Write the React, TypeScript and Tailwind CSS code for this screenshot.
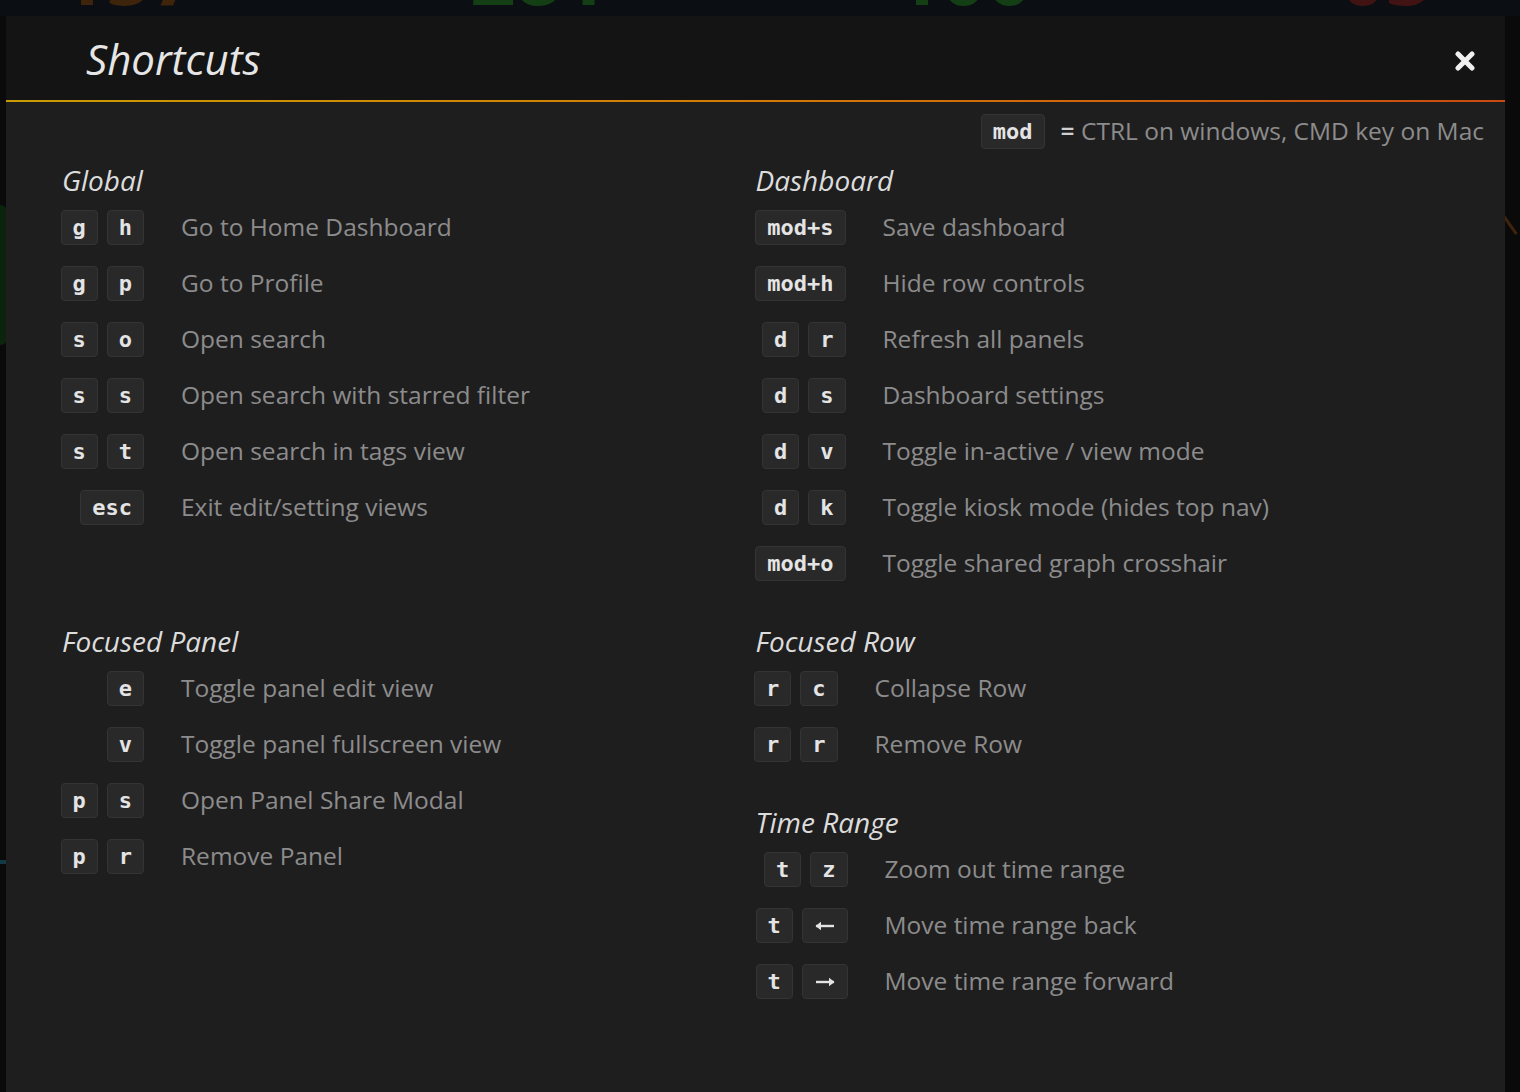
import React from "react";

type Row = { keys: string[]; desc: string };
type Section = { title: string; keyWidth: string; rows: Row[] };

const sans = "font-['Open_Sans',_'Noto_Sans',_sans-serif]";
const mono = "font-['DejaVu_Sans_Mono',_'Liberation_Mono',_monospace]";

const globalSection: Section = {
  title: "Global",
  keyWidth: "w-[82px]",
  rows: [
    { keys: ["g", "h"], desc: "Go to Home Dashboard" },
    { keys: ["g", "p"], desc: "Go to Profile" },
    { keys: ["s", "o"], desc: "Open search" },
    { keys: ["s", "s"], desc: "Open search with starred filter" },
    { keys: ["s", "t"], desc: "Open search in tags view" },
    { keys: ["esc"], desc: "Exit edit/setting views" },
  ],
};

const panelSection: Section = {
  title: "Focused Panel",
  keyWidth: "w-[82px]",
  rows: [
    { keys: ["e"], desc: "Toggle panel edit view" },
    { keys: ["v"], desc: "Toggle panel fullscreen view" },
    { keys: ["p", "s"], desc: "Open Panel Share Modal" },
    { keys: ["p", "r"], desc: "Remove Panel" },
  ],
};

const dashSection: Section = {
  title: "Dashboard",
  keyWidth: "w-[90px]",
  rows: [
    { keys: ["mod+s"], desc: "Save dashboard" },
    { keys: ["mod+h"], desc: "Hide row controls" },
    { keys: ["d", "r"], desc: "Refresh all panels" },
    { keys: ["d", "s"], desc: "Dashboard settings" },
    { keys: ["d", "v"], desc: "Toggle in-active / view mode" },
    { keys: ["d", "k"], desc: "Toggle kiosk mode (hides top nav)" },
    { keys: ["mod+o"], desc: "Toggle shared graph crosshair" },
  ],
};

const rowSection: Section = {
  title: "Focused Row",
  keyWidth: "w-[82px]",
  rows: [
    { keys: ["r", "c"], desc: "Collapse Row" },
    { keys: ["r", "r"], desc: "Remove Row" },
  ],
};

const timeSection: Section = {
  title: "Time Range",
  keyWidth: "w-[92px]",
  rows: [
    { keys: ["t", "z"], desc: "Zoom out time range" },
    { keys: ["t", "←"], desc: "Move time range back" },
    { keys: ["t", "→"], desc: "Move time range forward" },
  ],
};

function Arrow({ dir }: { dir: "left" | "right" }) {
  return (
    <svg width="20" height="10" viewBox="0 0 20 10" className={dir === "right" ? "rotate-180" : ""}>
      <path d="M1 5 H19" stroke="#e4e4e4" strokeWidth="2.4" />
      <path d="M0.5 5 L6 0.8 V9.2 Z" fill="#e4e4e4" />
    </svg>
  );
}

function Key({ k }: { k: string }) {
  const arrow = k === "←" || k === "→";
  return (
    <span
      className={`inline-flex h-[35px] items-center justify-center rounded-[4px] border border-[#343435] bg-[#29292a] px-[11px] text-[22px] font-bold text-[#e4e4e4] ${mono} ${
        arrow ? "w-[46px]" : ""
      }`}
    >
      {arrow ? <Arrow dir={k === "←" ? "left" : "right"} /> : k}
    </span>
  );
}

function ShortcutSection({ s }: { s: Section }) {
  return (
    <div className="mb-[33px]">
      <h3 className={`h-[36px] leading-[32px] text-[28px] italic text-[#dcdcdc] ${sans}`}>{s.title}</h3>
      {s.rows.map((r) => (
        <div key={r.desc} className="flex h-[56px] items-center">
          <div className={`flex shrink-0 justify-end gap-[9px] ${s.keyWidth}`}>
            {r.keys.map((k, i) => (
              <Key key={i} k={k} />
            ))}
          </div>
          <div className={`pl-[37px] text-[24.5px] text-[#8c8c8c] ${sans}`}>{r.desc}</div>
        </div>
      ))}
    </div>
  );
}

export default function App() {
  return (
    <div className="relative h-[1092px] w-[1520px] overflow-hidden bg-[#0a0a0b]">
      {/* ── dimmed dashboard behind ── */}
      <div className="grid h-[16px] grid-cols-[310px_385px_380px_1fr] gap-[55px] overflow-hidden bg-[#0b0e12]">
        {[
          { n: "157", c: "text-[#3e240b]", x: "pl-[60px]" },
          { n: "281", c: "text-[#143e14]", x: "pl-[105px]" },
          { n: "100", c: "text-[#143e14]", x: "pl-[90px]" },
          { n: "03", c: "text-[#421313]", x: "pl-[100px]" },
        ].map((p) => (
          <div key={p.n} className={`relative bg-[#0b0e12] ${p.x}`}>
            <span className={`absolute top-[-66px] text-[80px] font-bold leading-none ${p.c} ${sans}`}>{p.n}</span>
          </div>
        ))}
      </div>
      <div className="absolute left-0 top-[205px] h-[140px] w-[8px] rounded-r-full bg-[#0b240b]" />
      <div className="absolute left-0 top-[860px] h-[4px] w-[8px] bg-[#133a44]" />
      <div className="absolute right-[-2px] top-[222px] h-[3px] w-[26px] rotate-[55deg] bg-[#3e240b]" />

      {/* ── modal ── */}
      <div className="absolute left-[6px] top-[16px] h-[1100px] w-[1499px] bg-[#1f1e1f]">
        <div className="flex h-[84px] items-center justify-between bg-[#141414] pl-[80px] pr-[30px]">
          <h2 className={`text-[42px] italic text-[#e6e6e6] ${sans}`}>Shortcuts</h2>
          <svg width="20" height="20" viewBox="0 0 20 20" className="mt-[5px]">
            <path d="M3 3 L17 17 M17 3 L3 17" stroke="#f0f0f0" strokeWidth="5" strokeLinecap="round" />
          </svg>
        </div>
        <div className="h-[2px] bg-gradient-to-r from-[#c99b00] via-[#d37a06] to-[#c94a10]" />

        <div className="px-[56px]">
          <div className="mr-[-35px] flex items-center justify-end pt-[11px]">
            <Key k="mod" />
            <span className={`pl-[16px] text-[24.5px] text-[#8c8c8c] ${sans}`}>
              <span className="font-semibold text-[#d0d0d0]">=</span> CTRL on windows, CMD key on Mac
            </span>
          </div>

          <div className="mt-[14px] grid grid-cols-2">
            <ShortcutSection s={globalSection} />
            <ShortcutSection s={dashSection} />
            <ShortcutSection s={panelSection} />
            <div>
              <ShortcutSection s={rowSection} />
              <ShortcutSection s={timeSection} />
            </div>
          </div>
        </div>
      </div>
    </div>
  );
}
